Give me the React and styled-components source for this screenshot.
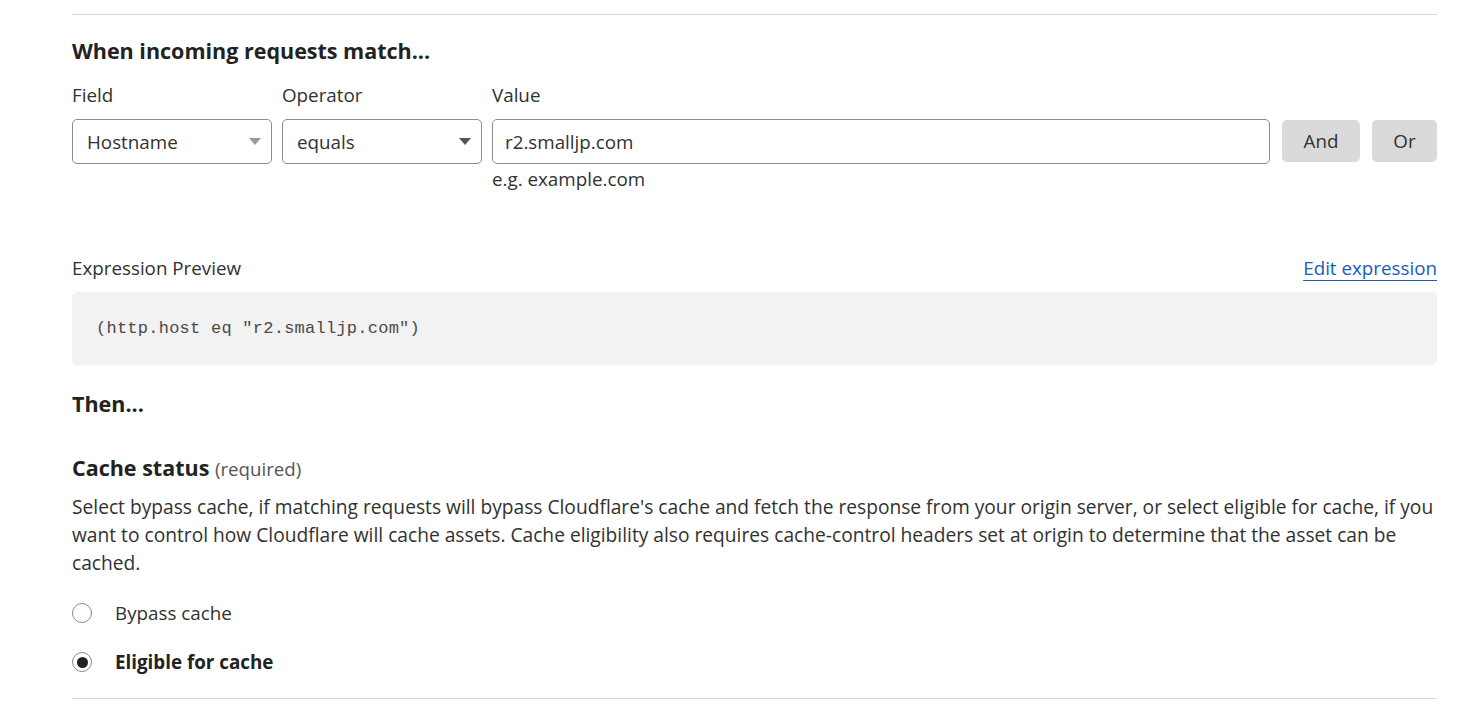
import React from "react";
import styled, { createGlobalStyle } from "styled-components";

const Global = createGlobalStyle`
  html, body { margin: 0; padding: 0; background: #fff; }
  body { font-family: "Open Sans", "Noto Sans", sans-serif; color: #313131; }
`;

const Page = styled.div`
  width: 1365px;
  padding: 0 36px 0 72px;
`;

const Rule = styled.hr`
  border: 0;
  border-top: 1px solid #d5d5d5;
  margin: ${(p) => p.$m || "0"};
`;

const Heading = styled.h2`
  font-size: 21.5px;
  font-weight: 700;
  color: #222;
  margin: 0;
  line-height: 28px;
`;

const FieldRow = styled.div`
  display: flex;
  gap: 10px;
  align-items: flex-start;
`;

const FieldCol = styled.div`
  display: flex;
  flex-direction: column;
  width: ${(p) => (p.$w ? `${p.$w}px` : "auto")};
  flex: ${(p) => (p.$grow ? "1" : "none")};
  margin-right: ${(p) => (p.$grow ? "2px" : "0")};
`;

const Label = styled.div`
  font-size: 18.8px;
  line-height: 24px;
  margin-bottom: 12px;
`;

const SelectBox = styled.div`
  height: 45px;
  box-sizing: border-box;
  border: 1px solid #8c8c8c;
  border-radius: 5px;
  display: flex;
  align-items: center;
  justify-content: space-between;
  padding: 0 10px 0 ${(p) => p.$pl || 14}px;
  font-size: 18.8px;
`;

const Caret = styled.span`
  width: 0;
  height: 0;
  border-left: 6px solid transparent;
  border-right: 6px solid transparent;
  border-top: 7px solid ${(p) => p.$c};
`;

const Hint = styled.div`
  font-size: 18.8px;
  line-height: 24px;
  margin-top: 3px;
`;

const Buttons = styled.div`
  display: flex;
  gap: 12px;
  padding-top: 37px;
`;

const Btn = styled.button`
  height: 42px;
  width: ${(p) => p.$w}px;
  border: 0;
  border-radius: 5px;
  background: #dadada;
  font-family: inherit;
  font-size: 18.8px;
  color: #313131;
  padding: 0;
`;

const PreviewHead = styled.div`
  display: flex;
  justify-content: space-between;
  align-items: center;
  margin-top: 63px;
  height: 28px;
`;

const SmallLabel = styled.div`
  font-size: 18.8px;
`;

const Link = styled.a`
  font-size: 18.8px;
  color: #1a5db8;
  text-decoration: underline;
  text-underline-offset: 5px;
  text-decoration-thickness: 1px;
`;

const CodeBox = styled.div`
  margin-top: 10px;
  height: 73px;
  background: #f2f2f2;
  border-radius: 5px;
  display: flex;
  align-items: center;
  padding-left: 24px;
  font-family: "Liberation Mono", monospace;
  font-size: 17px;
  letter-spacing: 0.25px;
  color: #4a4a4a;
`;

const Section = styled.div`
  margin-top: ${(p) => p.$mt}px;
`;

const Required = styled.span`
  font-size: 18.7px;
  font-weight: 400;
  color: #555;
`;

const Para = styled.p`
  margin: 10px 0 0;
  font-size: 19.2px;
  line-height: 28px;
`;

const RadioList = styled.div`
  display: flex;
  flex-direction: column;
  gap: 25px;
  margin-top: 24px;
`;

const RadioRow = styled.label`
  display: flex;
  align-items: center;
  gap: 23px;
  font-size: 18.8px;
  font-weight: ${(p) => (p.$on ? 700 : 400)};
  color: ${(p) => (p.$on ? "#222" : "#313131")};
  height: 24px;
`;

const Dot = styled.span`
  width: 20px;
  height: 20px;
  box-sizing: border-box;
  border-radius: 50%;
  border: 1px solid #8a8a8a;
  display: flex;
  align-items: center;
  justify-content: center;
  &::after {
    content: "";
    width: 11px;
    height: 11px;
    border-radius: 50%;
    background: ${(p) => (p.$on ? "#222" : "transparent")};
  }
`;

export default function App() {
  return (
    <>
      <Global />
      <Page>
        <Rule $m="14px 0 0" />
        <Section $mt={22}>
          <Heading>When incoming requests match...</Heading>
        </Section>
        <Section $mt={18}>
          <FieldRow>
            <FieldCol $w={200}>
              <Label>Field</Label>
              <SelectBox>
                Hostname <Caret $c="#9a9a9a" />
              </SelectBox>
            </FieldCol>
            <FieldCol $w={200}>
              <Label>Operator</Label>
              <SelectBox>
                equals <Caret $c="#555" />
              </SelectBox>
            </FieldCol>
            <FieldCol $grow>
              <Label>Value</Label>
              <SelectBox $pl={12}>r2.smalljp.com</SelectBox>
              <Hint>e.g. example.com</Hint>
            </FieldCol>
            <Buttons>
              <Btn $w={78}>And</Btn>
              <Btn $w={65}>Or</Btn>
            </Buttons>
          </FieldRow>
        </Section>
        <PreviewHead>
          <SmallLabel>Expression Preview</SmallLabel>
          <Link>Edit expression</Link>
        </PreviewHead>
        <CodeBox>(http.host eq "r2.smalljp.com")</CodeBox>
        <Section $mt={25}>
          <Heading>Then...</Heading>
        </Section>
        <Section $mt={36}>
          <Heading>
            Cache status <Required>(required)</Required>
          </Heading>
          <Para>
            Select bypass cache, if matching requests will bypass Cloudflare's cache and fetch the response from your
            origin server, or select eligible for cache, if you want to control how Cloudflare will cache assets. Cache
            eligibility also requires cache-control headers set at origin to determine that the asset can be cached.
          </Para>
        </Section>
        <RadioList>
          <RadioRow>
            <Dot /> Bypass cache
          </RadioRow>
          <RadioRow $on>
            <Dot $on /> Eligible for cache
          </RadioRow>
        </RadioList>
        <Rule $m="24px 0 0" />
      </Page>
    </>
  );
}
